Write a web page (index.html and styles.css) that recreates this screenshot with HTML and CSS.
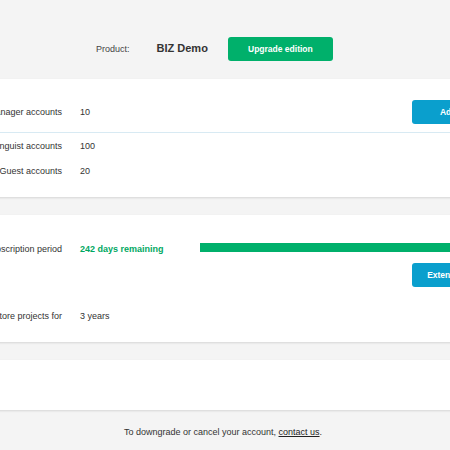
FILE: index.html
```html
<!DOCTYPE html>
<html>
<head>
<meta charset="utf-8">
<link rel="stylesheet" href="styles.css">
</head>
<body>
<div class="wide">
  <header class="product">
    <span class="product-label">Product:</span>
    <span class="product-name">BIZ Demo</span>
    <button class="btn btn-green">Upgrade edition</button>
  </header>

  <section class="card card-accounts">
    <div class="row row-first">
      <span class="label">Manager accounts</span>
      <span class="value">10</span>
      <button class="btn btn-blue action">Add accounts</button>
    </div>
    <div class="row">
      <span class="label">Linguist accounts</span>
      <span class="value">100</span>
    </div>
    <div class="row">
      <span class="label">Guest accounts</span>
      <span class="value">20</span>
    </div>
  </section>

  <section class="card card-sub">
    <div class="row row-sub">
      <span class="label">Subscription period</span>
      <span class="value value-green">242 days remaining</span>
      <div class="bar"><div class="bar-fill" style="width:100%"></div></div>
    </div>
    <div class="row row-extend">
      <button class="btn btn-blue action">Extend subscription</button>
    </div>
    <div class="row row-store">
      <span class="label">Store projects for</span>
      <span class="value">3 years</span>
    </div>
  </section>

  <section class="card card-empty"></section>
</div>
<footer class="footer">To downgrade or cancel your account, <a href="#">contact us</a>.</footer>
</body>
</html>
```

FILE: styles.css
```css
html, body {
  margin: 0;
  padding: 0;
}
body {
  background: #f4f4f4;
  font-family: "Liberation Sans", Arial, Helvetica, sans-serif;
  font-size: 9px;
  color: #333;
  overflow: hidden;
  width: 450px;
  height: 450px;
}
.wide {
  margin-left: -100px;
  width: 700px;
}
.product {
  height: 79px;
  box-sizing: border-box;
  padding-top: 37px;
  padding-left: 196px;
  display: flex;
  align-items: flex-start;
}
.product-label {
  line-height: 24px;
  color: #444;
  margin-right: 27px;
}
.product-name {
  font-weight: bold;
  font-size: 11px;
  line-height: 22px;
  color: #333;
  margin-right: 20px;
}
.btn {
  border: 0;
  border-radius: 3px;
  color: #fff;
  font-family: "Liberation Sans", Arial, Helvetica, sans-serif;
  font-weight: bold;
  font-size: 8.5px;
  padding: 0;
  height: 24px;
  cursor: pointer;
}
.btn-green {
  background: #00b06b;
  width: 105px;
}
.btn-blue {
  background: #0a9fcd;
  width: 112px;
}
.card {
  background: #fff;
  box-shadow: 0 1px 2px rgba(0, 0, 0, 0.13);
}
.row {
  display: grid;
  grid-template-columns: 180px 120px 212px 130px;
  align-items: center;
}
.label {
  grid-column: 1;
  text-align: right;
  padding-right: 18px;
  color: #333;
  white-space: nowrap;
}
.value {
  grid-column: 2;
  white-space: nowrap;
}
.action {
  grid-column: 4;
}
.card-accounts {
  padding-top: 21px;
  height: 118px;
  box-sizing: border-box;
}
.row-first {
  height: 24px;
  padding-bottom: 8px;
  border-bottom: 1px solid #d8eaf3;
}
.card-accounts .row:not(.row-first) {
  height: 25px;
}
.card-sub {
  margin-top: 18px;
  height: 127px;
  box-sizing: border-box;
  padding-top: 28px;
}
.row-sub {
  height: 12px;
}
.value-green {
  color: #00a862;
  font-weight: bold;
  font-size: 9px;
}
.bar {
  grid-column: 3 / 5;
  height: 9px;
  background: #e6e6e6;
  align-self: start;
}
.bar-fill {
  height: 100%;
  background: #00b06b;
}
.row-extend {
  margin-top: 8px;
  height: 24px;
}
.row-store {
  margin-top: 22px;
  height: 14px;
}
.card-empty {
  margin-top: 18px;
  height: 50px;
}
.footer {
  text-align: center;
  padding-top: 17px;
  padding-right: 4px;
  color: #333;
}
.footer a {
  color: #222;
  text-decoration: underline;
}
```
